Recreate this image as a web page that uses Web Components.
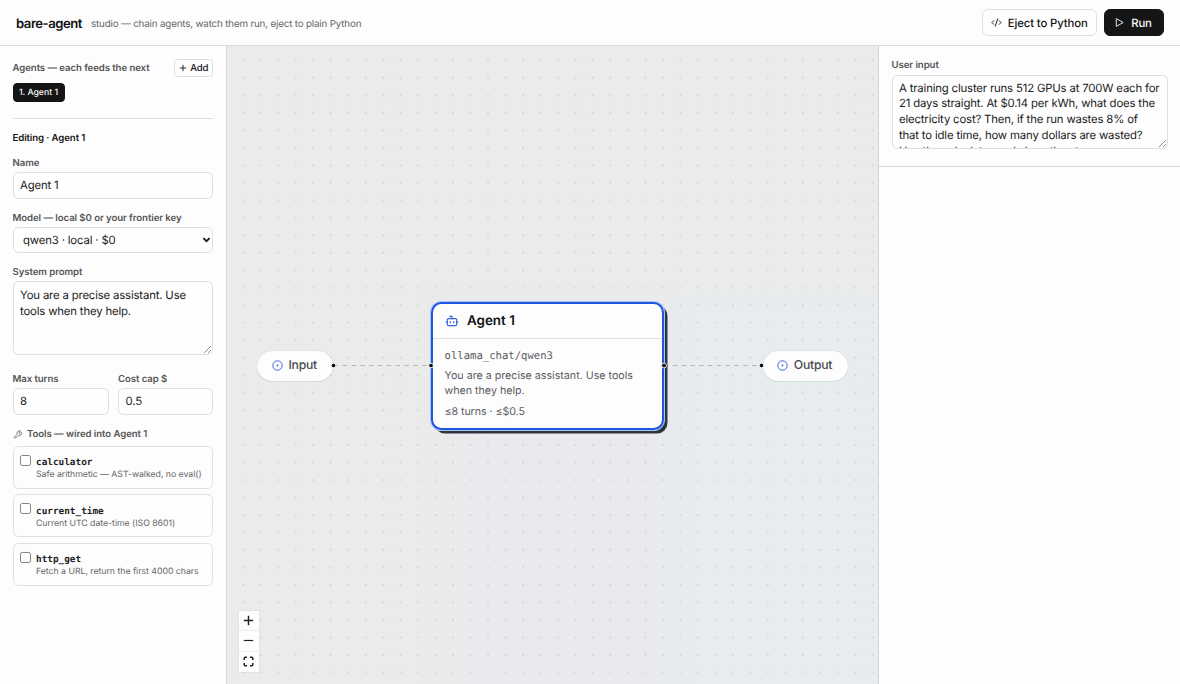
<!DOCTYPE html>
<html lang="en">
<head>
<meta charset="utf-8">
<title>bare-agent studio</title>
<style>
html,body{margin:0;height:100%;overflow:hidden}
body{font-family:Inter,"Liberation Sans",sans-serif;text-rendering:geometricPrecision;background:#fdfdfd;color:#171717;--line:#dfdfdf;--muted:#555}
*{box-sizing:border-box}
</style>
</head>
<body>
<studio-app></studio-app>
<script>
const define=(name,html)=>customElements.define(name,class extends HTMLElement{
  constructor(){
    super();
    const t=document.createElement('template');
    t.innerHTML='<style>*{box-sizing:border-box}:host{box-sizing:border-box}</style>'+html;
    this.attachShadow({mode:'open'}).append(t.content.cloneNode(true));
  }
});

define('ui-button',`<style>
:host{display:flex;align-items:center;justify-content:center;border:1px solid var(--line);border-radius:6px;background:#fefefe;color:#171717;font-size:11.36px;font-weight:500;letter-spacing:-.14px;line-height:1;white-space:nowrap}
:host([primary]){background:#151515;border-color:#151515;color:#fafafa}
:host([small]){font-size:9.6px;border-radius:3.5px}
::slotted(svg){flex:none;display:block}
</style><slot></slot>`);

define('field-label',`<style>
:host{display:flex;align-items:center;height:12px;padding-top:2px;font-size:9.65px;font-weight:560;letter-spacing:-.08px;line-height:12px;color:var(--muted);white-space:nowrap}
</style><slot></slot>`);

define('text-box',`<style>
:host{display:block;height:27px;border:1px solid var(--line);border-radius:5.5px;background:#fefefe;font-size:11.36px;letter-spacing:-.16px;line-height:25px;padding:0 6.5px;color:#222;white-space:nowrap}
</style><slot></slot>`);

define('text-area',`<style>
:host{display:block;position:relative;height:74px;border:1px solid var(--line);border-radius:5.5px;background:#fefefe;font-size:11.36px;letter-spacing:-.17px;line-height:15.75px;padding:var(--pad-top,5.5px) 6.5px 0;color:#222;overflow:hidden}
.t{height:100%;overflow:hidden;white-space:pre}
svg{position:absolute;right:0;bottom:0}
</style><div class="t"><slot></slot></div>
<svg width="9" height="9" viewBox="0 0 9 9"><path d="M1 8 8 1M5 8 8 5" stroke="#777" stroke-width=".8"/></svg>`);

define('select-box',`<style>
:host{display:flex;align-items:center;justify-content:space-between;height:26px;border:1px solid var(--line);border-radius:5.5px;background:#fefefe;font-size:11.36px;letter-spacing:-.16px;padding:0 1.5px 0 9.5px;color:#222;white-space:nowrap}
</style><slot></slot><svg width="9" height="8" viewBox="0 0 9 8"><path d="M1.4 2.2 4.5 5.2 7.6 2.2" fill="none" stroke="#111" stroke-width="1.7"/></svg>`);

define('tool-card',`<style>
:host{display:flex;height:43px;border:1px solid var(--line);border-radius:5.5px;background:#fdfdfd;padding:8px 6px 0;gap:5.5px}
i{flex:none;width:11px;height:11px;border:1px solid #858585;border-radius:2.2px;background:#fff}
b{display:block;font:700 9.4px/12px "DejaVu Sans Mono",monospace;color:#222;margin-top:2.5px}
.d{font-size:8.72px;letter-spacing:-.02px;line-height:13.5px;color:#666;white-space:nowrap}
</style><i></i><div><b><slot name="name"></slot></b><div class="d"><slot></slot></div></div>`);

define('app-header',`<style>
:host{display:flex;align-items:center;height:46px;padding:0 16px;border-bottom:1px solid #dcdcdc;background:#fdfdfd}
h1{margin:2px 0 0;font-size:13.1px;font-weight:600;letter-spacing:-.47px;color:#111;line-height:16px;width:66px;white-space:nowrap}
p{margin:4px 0 0 9px;font-size:9.8px;letter-spacing:-.17px;line-height:14px;color:#666}
nav{margin-left:auto;display:flex;gap:7px}
ui-button{height:27px}
.e{width:115px;gap:5.5px}.r{width:60px;gap:6px;padding-right:2px}
span{margin-top:2px}
</style>
<h1>bare-agent</h1><p>studio — chain agents, watch them run, eject to plain Python</p>
<nav><ui-button class="e"><svg width="11" height="11" viewBox="0 0 24 24" fill="none" stroke="currentColor" stroke-width="2" stroke-linecap="round" stroke-linejoin="round"><path d="m18 16 4-4-4-4M6 8l-4 4 4 4M14.5 4l-5 16"/></svg><span>Eject to Python</span></ui-button>
<ui-button class="r" primary><svg width="11" height="11" viewBox="0 0 24 24" fill="none" stroke="currentColor" stroke-width="2" stroke-linejoin="round"><path d="M5 3.5v17L20 12z"/></svg><span>Run</span></ui-button></nav>`);

define('agent-panel',`<style>
:host{display:flex;flex-direction:column;padding:13px 13px 0 12.5px;border-right:1px solid #d9d9d9;background:#fdfdfd}
.top{display:flex;align-items:center;justify-content:space-between;height:18px}
.top ui-button{width:39px;height:18px;gap:3.5px}
.top span{margin-top:1px}
.chip{align-self:flex-start;width:52px;height:19px;margin-top:6px;padding-top:2px;font-size:8.72px;letter-spacing:-.02px;border-radius:4px}
hr{width:100%;border:0;border-top:1px solid var(--line);margin:16px 0 0}
h2{margin:14px 0 0;font-size:9.65px;letter-spacing:-.1px;line-height:12px;font-weight:600;color:#171717}
field-label{margin-bottom:3px}
.n{margin-top:12px}.m{margin-top:13px}.s{margin-top:13px}.two{margin-top:17.5px;display:grid;grid-template-columns:96px 95px;gap:9.5px}
.k{margin:13px 0 6px;gap:5px}
.tools{display:flex;flex-direction:column;gap:5.5px}
.sp{--pad-top:5.8px}
</style>
<div class="top"><field-label style="margin:0">Agents — each feeds the next</field-label><ui-button small><svg width="8" height="8" viewBox="0 0 8 8"><path d="M4 .8v6.4M.8 4h6.4" stroke="currentColor" stroke-width=".9"/></svg><span>Add</span></ui-button></div>
<ui-button class="chip" primary>1. Agent 1</ui-button>
<hr><h2>Editing · Agent 1</h2>
<field-label class="n">Name</field-label><text-box>Agent 1</text-box>
<field-label class="m">Model — local $0 or your frontier key</field-label><select-box>qwen3 · local · $0</select-box>
<field-label class="s">System prompt</field-label><text-area class="sp">You are a precise assistant. Use
tools when they help.</text-area>
<div class="two"><div><field-label>Max turns</field-label><text-box>8</text-box></div><div><field-label>Cost cap $</field-label><text-box>0.5</text-box></div></div>
<field-label class="k"><svg width="9.5" height="9.5" viewBox="0 0 24 24" fill="none" stroke="#666" stroke-width="2" stroke-linecap="round" stroke-linejoin="round"><path d="M14.7 6.3a1 1 0 0 0 0 1.4l1.6 1.6a1 1 0 0 0 1.4 0l3.77-3.77a6 6 0 0 1-7.94 7.94l-6.91 6.91a2.12 2.12 0 0 1-3-3l6.91-6.91a6 6 0 0 1 7.94-7.94z"/></svg><span>Tools — wired into Agent 1</span></field-label>
<div class="tools">
<tool-card><span slot="name">calculator</span>Safe arithmetic — AST-walked, no eval()</tool-card>
<tool-card><span slot="name">current_time</span>Current UTC date-time (ISO 8601)</tool-card>
<tool-card><span slot="name">http_get</span>Fetch a URL, return the first 4000 chars</tool-card>
</div>`);

define('io-node',`<style>
:host{display:flex;align-items:center;justify-content:center;gap:5.5px;height:30px;padding:0 1px 1.5px 0;border-radius:15px;background:#fdfdfe;font-size:12.2px;font-weight:500;letter-spacing:-.25px;color:#4a4a4e;box-shadow:0 0 1px #bbb,0 1px 1px #0001}
svg{position:relative;top:.5px}
</style><svg width="11" height="11" viewBox="0 0 11 11" fill="none" stroke="#3f66dc"><circle cx="5.5" cy="5.5" r="4.7"/><circle cx="5.5" cy="5.5" r=".9" fill="#3f66dc" stroke="none"/></svg><slot></slot>`);

define('agent-node',`<style>
:host{display:block;height:128px;border:2.5px solid #1f56e0;border-radius:10.5px;background:#fdfdfe;box-shadow:0 0 0 1px #a9c3f7,3.5px 3.5px 0 #2f353f}
header{display:flex;align-items:center;gap:8px;height:35.5px;padding:1px 12px 0;border-bottom:1px solid #e0e0e4;font-size:13.4px;font-weight:600;color:#111}
.b{padding:9.5px 11.5px;color:#5b5b60;font-size:10.68px;line-height:15.8px;white-space:pre}
code{display:block;font:10.6px/14px "DejaVu Sans Mono",monospace}
.p{margin-top:5px}.l{margin-top:4.5px;letter-spacing:-.07px}
</style><header><svg width="14" height="14" viewBox="0 0 24 24" fill="none" stroke="#3565df" stroke-width="2" stroke-linecap="round" stroke-linejoin="round"><path d="M12 8V4H8M2 14h2M20 14h2M15 13v2M9 13v2"/><rect width="16" height="12" x="4" y="8" rx="2"/></svg><slot name="title"></slot></header><div class="b"><code><slot name="model"></slot></code><div class="p"><slot></slot></div><div class="l"><slot name="limits"></slot></div></div>`);

define('zoom-controls',`<style>
:host{display:grid;grid-template-rows:repeat(3,1fr);width:20.5px;height:61px;background:#fefefe;box-shadow:0 0 1px #0003}
div{display:grid;place-items:center;border-bottom:1px solid #eee}div:last-child{border:0}
svg{fill:none;stroke:#222;stroke-width:1.5}
</style>
<div><svg width="11" height="11"><path d="M5.5 .8v9.4M.8 5.5h9.4"/></svg></div>
<div><svg width="11" height="11"><path d="M.8 5.5h9.4" stroke-width="1.2"/></svg></div>
<div><svg width="11" height="11"><path d="M1.2 4V2.2q0-1 1-1H4M7 1.2h1.8q1 0 1 1V4M9.8 7v1.8q0 1-1 1H7M4 9.8H2.2q-1 0-1-1V7"/></svg></div>`);

define('flow-canvas',`<style>
:host{display:block;position:relative;overflow:hidden;background:
radial-gradient(circle,#cecece .5px,transparent 1px) 7.5px 5.7px/17.49px 17.49px,
linear-gradient(#ebebeb 235px,transparent 265px),
linear-gradient(90deg,#ebebeb 190px,#eae9ed 260px,#eae9ed 410px,#e7ecef 465px)}
.n,svg.e{position:absolute}
svg.e{inset:0}
</style>
<svg class="e" width="651" height="638"><path d="M107 319.5H204M437 319.5H535" fill="none" stroke="#b4b4b6" stroke-dasharray="4.4 4.4"/></svg>
<io-node class="n" style="left:30px;top:304.5px;width:76px">Input</io-node>
<agent-node class="n" style="left:204px;top:255.5px;width:233px"><span slot="title">Agent 1</span><span slot="model">ollama_chat/qwen3</span>You are a precise assistant. Use tools
when they help.<span slot="limits">≤8 turns · ≤$0.5</span></agent-node>
<io-node class="n" style="left:536px;top:304.5px;width:84.5px">Output</io-node>
<svg class="e" width="651" height="638" fill="#111" stroke="#fff" stroke-width=".9"><circle cx="106.5" cy="319.5" r="2.3"/><circle cx="204" cy="319.5" r="2.3"/><circle cx="437" cy="319.5" r="2.4"/><circle cx="534.5" cy="319.5" r="2.3"/></svg>
<zoom-controls class="n" style="left:11.5px;bottom:12px"></zoom-controls>`);

define('run-panel',`<style>
:host{display:block;border-left:1px solid #d4d4d6;background:#fdfdfd;--pad-top:4.6px}
.in{height:121px;border-bottom:1px solid #d9d9d9;padding:13px 12.5px 0 12.5px}
field-label{margin-bottom:4px}
</style><div class="in"><field-label>User input</field-label><text-area>A training cluster runs 512 GPUs at 700W each for
21 days straight. At $0.14 per kWh, what does the
electricity cost? Then, if the run wastes 8% of
that to idle time, how many dollars are wasted?
Use the calculator and show the steps.</text-area></div>`);

define('studio-app',`<style>
:host{display:flex;flex-direction:column;height:100vh}
main{flex:1;min-height:0;display:grid;grid-template-columns:227px 651px minmax(0,1fr)}
</style><app-header></app-header><main><agent-panel></agent-panel><flow-canvas></flow-canvas><run-panel></run-panel></main>`);
</script>
</body>
</html>
